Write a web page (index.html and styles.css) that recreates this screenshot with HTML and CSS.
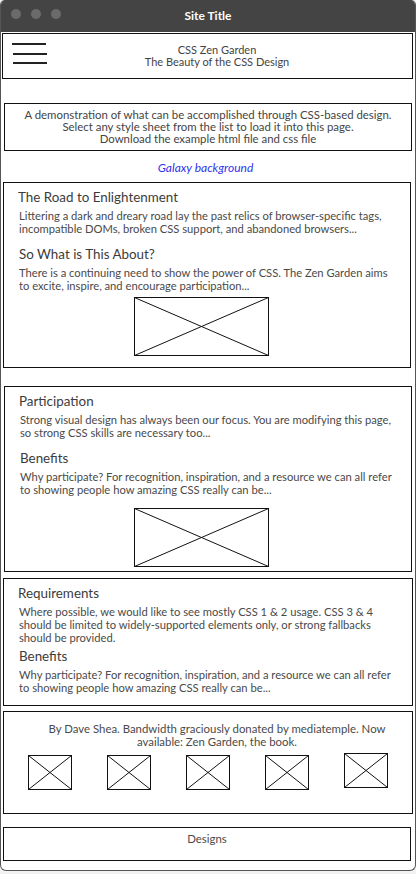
FILE: index.html
```html
<!DOCTYPE html>
<html lang="en">
<head>
<meta charset="utf-8">
<title>Site Title</title>
<link rel="stylesheet" href="styles.css">
</head>
<body>
<div class="window">
  <div class="titlebar">
    <div class="dots"><span class="dot"></span><span class="dot"></span><span class="dot"></span></div>
    <div class="title">Site Title</div>
  </div>
  <div class="content">
    <header class="box header">
      <svg class="burger" width="36" height="24" viewBox="0 0 36 24">
        <line x1="0" y1="1" x2="34" y2="1" stroke="#222" stroke-width="2"/>
        <line x1="1" y1="11" x2="35" y2="11" stroke="#222" stroke-width="2"/>
        <line x1="1" y1="20" x2="35" y2="20" stroke="#222" stroke-width="2"/>
      </svg>
      <div class="header-text">CSS Zen Garden<br>The Beauty of the CSS Design</div>
    </header>

    <div class="box intro">A demonstration of what can be accomplished through CSS-based design.<br>Select any style sheet from the list to load it into this page.<br>Download the example html file and css file</div>

    <div class="galaxy">Galaxy background</div>

    <section class="box section s1">
      <h2 class="heading first">The Road to Enlightenment</h2>
      <p class="para">Littering a dark and dreary road lay the past relics of browser-specific tags,<br>incompatible DOMs, broken CSS support, and abandoned browsers...</p>
      <h2 class="heading">So What is This About?</h2>
      <p class="para">There is a continuing need to show the power of CSS. The Zen Garden aims<br>to excite, inspire, and encourage participation...</p>
      <svg class="placeholder big" width="135" height="59" viewBox="0 0 135 59">
        <rect x="0.5" y="0.5" width="134" height="58" fill="#fff" stroke="#111"/>
        <line x1="0.5" y1="0.5" x2="134.5" y2="58.5" stroke="#111"/>
        <line x1="134.5" y1="0.5" x2="0.5" y2="58.5" stroke="#111"/>
      </svg>
    </section>

    <section class="box section s2">
      <h2 class="heading first">Participation</h2>
      <p class="para">Strong visual design has always been our focus. You are modifying this page,<br>so strong CSS skills are necessary too...</p>
      <h2 class="heading">Benefits</h2>
      <p class="para">Why participate? For recognition, inspiration, and a resource we can all refer<br>to showing people how amazing CSS really can be...</p>
      <svg class="placeholder big" width="135" height="59" viewBox="0 0 135 59">
        <rect x="0.5" y="0.5" width="134" height="58" fill="#fff" stroke="#111"/>
        <line x1="0.5" y1="0.5" x2="134.5" y2="58.5" stroke="#111"/>
        <line x1="134.5" y1="0.5" x2="0.5" y2="58.5" stroke="#111"/>
      </svg>
    </section>

    <section class="box section s3">
      <h2 class="heading first">Requirements</h2>
      <p class="para">Where possible, we would like to see mostly CSS 1 &amp; 2 usage. CSS 3 &amp; 4<br>should be limited to widely-supported elements only, or strong fallbacks<br>should be provided.</p>
      <h2 class="heading tight">Benefits</h2>
      <p class="para">Why participate? For recognition, inspiration, and a resource we can all refer<br>to showing people how amazing CSS really can be...</p>
    </section>

    <footer class="box footer">
      <p class="footer-text">By Dave Shea. Bandwidth graciously donated by mediatemple. Now<br>available: Zen Garden, the book.</p>
      <div class="thumbs">
        <svg class="thumb" width="44" height="35" viewBox="0 0 44 35"><rect x="0.5" y="0.5" width="43" height="34" fill="#fff" stroke="#111"/><line x1="0.5" y1="0.5" x2="43.5" y2="34.5" stroke="#111"/><line x1="43.5" y1="0.5" x2="0.5" y2="34.5" stroke="#111"/></svg>
        <svg class="thumb" width="44" height="35" viewBox="0 0 44 35"><rect x="0.5" y="0.5" width="43" height="34" fill="#fff" stroke="#111"/><line x1="0.5" y1="0.5" x2="43.5" y2="34.5" stroke="#111"/><line x1="43.5" y1="0.5" x2="0.5" y2="34.5" stroke="#111"/></svg>
        <svg class="thumb" width="44" height="35" viewBox="0 0 44 35"><rect x="0.5" y="0.5" width="43" height="34" fill="#fff" stroke="#111"/><line x1="0.5" y1="0.5" x2="43.5" y2="34.5" stroke="#111"/><line x1="43.5" y1="0.5" x2="0.5" y2="34.5" stroke="#111"/></svg>
        <svg class="thumb" width="44" height="35" viewBox="0 0 44 35"><rect x="0.5" y="0.5" width="43" height="34" fill="#fff" stroke="#111"/><line x1="0.5" y1="0.5" x2="43.5" y2="34.5" stroke="#111"/><line x1="43.5" y1="0.5" x2="0.5" y2="34.5" stroke="#111"/></svg>
        <svg class="thumb raised" width="44" height="35" viewBox="0 0 44 35"><rect x="0.5" y="0.5" width="43" height="34" fill="#fff" stroke="#111"/><line x1="0.5" y1="0.5" x2="43.5" y2="34.5" stroke="#111"/><line x1="43.5" y1="0.5" x2="0.5" y2="34.5" stroke="#111"/></svg>
      </div>
    </footer>

    <nav class="box designs">Designs</nav>
  </div>
</div>
</body>
</html>
```

FILE: styles.css
```css
* { box-sizing: border-box; }

html, body {
  margin: 0;
  padding: 0;
}

body {
  background: #f2f2f2;
  font-family: "Lato", "Liberation Sans", sans-serif;
  color: #444;
  width: 416px;
  height: 874px;
  overflow: hidden;
}

.window {
  width: 416px;
  height: 871px;
  background: #fff;
  border: 1px solid #555;
  border-top: none;
  border-radius: 5px 5px 6px 6px;
  display: flex;
  flex-direction: column;
  overflow: hidden;
}

.titlebar {
  height: 32px;
  background: #444;
  display: flex;
  align-items: center;
  justify-content: center;
  flex: none;
  margin: 0 -1px;
  position: relative;
}

.dots {
  position: absolute;
  left: 11px;
  top: 9px;
  display: flex;
  gap: 10px;
}

.dot {
  width: 10px;
  height: 10px;
  border-radius: 50%;
  background: #6b6b6b;
}

.title {
  color: #fff;
  font-size: 12px;
  font-weight: bold;
  margin-top: -2px;
}

.content {
  display: flex;
  flex-direction: column;
  padding: 1px 2px 0 1px;
}

.box {
  border: 1px solid #111;
  background: #fff;
}

.header {
  height: 46px;
  display: flex;
  align-items: flex-start;
}

.burger {
  margin: 9px 0 0 9px;
  flex: none;
}

.header-text {
  flex: 1;
  text-align: center;
  font-size: 11px;
  line-height: 12px;
  color: #444;
  padding-top: 10px;
  margin-right: 26px;
}

.intro {
  margin: 24px 1px 0 2px;
  padding: 5px 8px;
  text-align: center;
  font-size: 11.4px;
  line-height: 12px;
  color: #444;
}

.galaxy {
  text-align: center;
  font-style: italic;
  color: #3232ee;
  font-size: 12px;
  line-height: 14px;
  margin: 10px 0 7px -4px;
}

.section {
  display: flex;
  flex-direction: column;
  padding: 5px 10px 10px 15px;
}

.s1 { margin: 0 2px 0 1px; height: 186px; }
.s2 { margin: 18px 1px 0 2px; padding-bottom: 4px; height: 186px; }
.s3 { margin: 6px 0 0 1px; padding-bottom: 10px; height: 128px; }

.heading {
  font-weight: normal;
  font-size: 13.4px;
  line-height: 18px;
  color: #3c3c3c;
  margin: 10px 0 0;
}

.heading.first {
  margin-top: 0;
  margin-left: -1px;
}

.heading.tight {
  margin-top: 3px;
}

.para {
  font-size: 11.2px;
  line-height: 13px;
  margin: 3px 0 0;
  color: #4a4a4a;
}

.placeholder {
  display: block;
  align-self: flex-start;
  margin: 5px 0 0 115px;
}

.s2 .placeholder {
  margin-top: 12px;
  margin-left: 114px;
}

.footer {
  margin: 5px 0 0 1px;
  height: 103px;
  display: flex;
  flex-direction: column;
  align-items: center;
  padding-top: 10px;
}

.footer-text {
  margin: 0;
  padding-left: 18px;
  text-align: center;
  font-size: 11.4px;
  line-height: 13px;
  color: #4a4a4a;
}

.thumbs {
  display: flex;
  gap: 35px;
  align-items: flex-start;
  margin-top: 7px;
}

.thumb {
  display: block;
}

.thumb.raised {
  margin-top: -2px;
}

.designs {
  margin: 13px 2px 0 1px;
  height: 34px;
  text-align: center;
  font-size: 11.4px;
  line-height: 14px;
  padding-top: 4px;
  color: #4a4a4a;
}
```
